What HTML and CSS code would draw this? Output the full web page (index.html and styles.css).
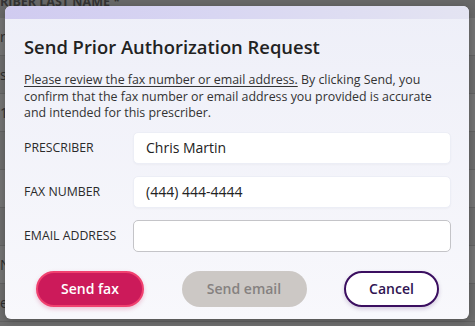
FILE: index.html
```html
<!DOCTYPE html>
<html lang="en">
<head>
  <meta charset="UTF-8">
  <meta name="viewport" content="width=device-width, initial-scale=1.0">
  <title>Send Prior Authorization Request</title>
  <link rel="stylesheet" href="styles.css">
</head>
<body>
  <!-- Página por trás do modal -->
  <div class="page">
    <div class="page-head">RIBER LAST NAME *</div>
    <div class="page-row row-a"><span>rt</span></div>
    <div class="page-row row-b"><span>s</span></div>
    <div class="page-row row-a"><span>1</span></div>
    <div class="page-row row-b"><span></span></div>
    <div class="page-row row-a"><span></span></div>
    <div class="page-row row-b"><span></span></div>
    <div class="page-row row-a"><span>N</span><span>D</span></div>
    <div class="page-row row-b"><span>ebec</span><span>11-4d220</span></div>
  </div>

  <!-- Modal -->
  <div class="modal">
    <div class="modal-bar"></div>
    <div class="modal-body">
      <h2>Send Prior Authorization Request</h2>
      <p class="notice">
        <u>Please review the fax number or email address.</u> By clicking Send, you
        confirm that the fax number or email address you provided is accurate
        and intended for this prescriber.
      </p>

      <div class="field">
        <label for="prescriber">PRESCRIBER</label>
        <input id="prescriber" class="filled" type="text" value="Chris Martin">
      </div>
      <div class="field">
        <label for="fax">FAX NUMBER</label>
        <input id="fax" class="filled" type="text" value="(444) 444-4444">
      </div>
      <div class="field">
        <label for="email">EMAIL ADDRESS</label>
        <input id="email" class="empty" type="text">
      </div>

      <div class="actions">
        <button class="btn btn-fax">Send fax</button>
        <button class="btn btn-email" disabled>Send email</button>
        <button class="btn btn-cancel">Cancel</button>
      </div>
    </div>
  </div>
</body>
</html>
```

FILE: styles.css
```css
body {
  margin: 0;
  font-family: "Open Sans", "Noto Sans", sans-serif;
  background: #6f6f6f;
  width: 475px;
  height: 326px;
  overflow: hidden;
  position: relative;
}
.page {
  color: #2e2e2e;
}
.page-head {
  height: 18px;
  line-height: 4px;
  font-size: 12.5px;
  font-weight: 700;
  background: #686868;
  color: #333;
  overflow: hidden;
  white-space: nowrap;
}
.page-row {
  height: 37px;
  display: flex;
  justify-content: space-between;
  align-items: center;
  font-size: 14px;
  border-bottom: 1px solid #626262;
}
.page-row span {
  padding: 0 8px 0 0;
}
.page-row.row-a {
  background: #747474;
}
.page-row.row-b {
  background: #6d6d6d;
}
.modal {
  position: absolute;
  left: 5px;
  top: 6px;
  width: 464px;
  height: 313px;
  border-radius: 6px;
  overflow: hidden;
  background: linear-gradient(180deg, #eeeff8 0%, #f8f8fc 100%);
  box-shadow: 0 2px 8px rgba(0, 0, 0, 0.25);
}
.modal-bar {
  height: 13px;
  background: linear-gradient(90deg, #d0cbf0 0%, #d8d6f2 45%, #e4e4f2 100%);
}
.modal-body {
  padding: 0 18px 0 19px;
}
h2 {
  margin: 16px 0 0;
  font-size: 18.4px;
  font-weight: 600;
  color: #222;
  line-height: 24px;
}
.notice {
  margin: 13px 0 10px;
  font-size: 12.4px;
  line-height: 16.5px;
  color: #333;
}
.notice u {
  text-decoration-thickness: 1px;
  text-underline-offset: 2px;
}
.field {
  display: flex;
  align-items: center;
  margin-bottom: 12px;
}
.field label {
  width: 109px;
  font-size: 12.3px;
  color: #2a2a2a;
}
.field input {
  width: 318px;
  height: 32px;
  box-sizing: border-box;
  border-radius: 5px;
  padding: 0 12px;
  font-family: inherit;
  font-size: 14px;
  color: #222;
  background: #fff;
}
.field input.filled {
  border: 1px solid #eceef6;
  box-shadow: 0 1px 2px rgba(0, 0, 0, 0.03);
}
.field input.empty {
  border: 1px solid #c4c4c8;
}
.actions {
  display: flex;
  justify-content: space-between;
  padding: 7px 12px 0 12px;
}
.btn {
  height: 36px;
  border-radius: 18px;
  font-family: inherit;
  font-size: 14px;
  font-weight: 600;
  cursor: pointer;
  box-sizing: border-box;
}
.btn-fax {
  width: 108px;
  background: #cc1a5a;
  color: #fff;
  border: 2px solid #f0416f;
  box-shadow: 0 2px 4px rgba(204, 26, 90, 0.25);
}
.btn-email {
  width: 125px;
  background: #ccc8c5;
  color: #858180;
  border: none;
}
.btn-cancel {
  width: 95px;
  background: #fff;
  color: #2f1352;
  border: 2px solid #3b0f60;
  box-shadow: 0 2px 4px rgba(59, 15, 96, 0.2);
}
```
